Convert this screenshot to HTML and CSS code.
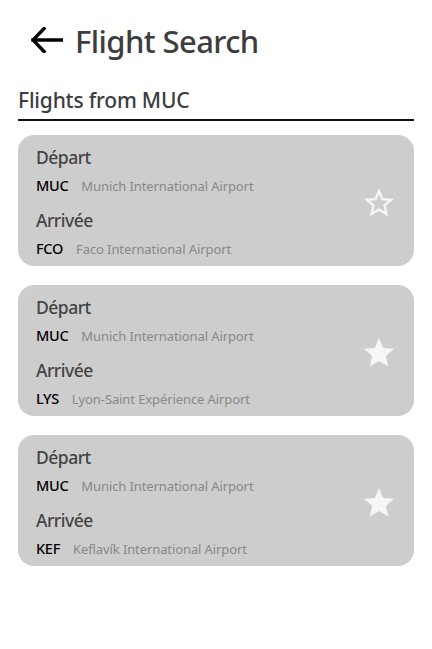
FILE: index.html
```html
<!DOCTYPE html>
<html>
<head>
<meta charset="utf-8">
<link rel="stylesheet" href="styles.css">
</head>
<body>
<div class="app">
  <header class="topbar">
    <svg class="back" width="32" height="26" viewBox="0 0 32 26"><path d="M13 1.5 L2 13 L13 24.5 M2 13 H31" fill="none" stroke="#000" stroke-width="3.4" stroke-linecap="square" stroke-linejoin="miter"/></svg>
    <h1 class="title">Flight Search</h1>
  </header>
  <h2 class="section">Flights from MUC</h2>
  <div class="list">
    <div class="card">
      <div class="info">
        <div class="label">Départ</div>
        <div class="row"><span class="code">MUC</span><span class="name">Munich International Airport</span></div>
        <div class="label">Arrivée</div>
        <div class="row"><span class="code">FCO</span><span class="name">Faco International Airport</span></div>
      </div>
      <svg class="star" width="36" height="36" viewBox="0 0 24 24"><path fill="#f6f6f6" d="M22 9.24l-7.19-.62L12 2 9.19 8.63 2 9.24l5.46 4.73L5.82 21 12 17.27 18.18 21l-1.63-7.03L22 9.24zM12 15.4l-3.76 2.27 1-4.28-3.32-2.88 4.38-.38L12 6.1l1.71 4.04 4.38.38-3.32 2.88 1 4.28L12 15.4z"/></svg>
    </div>
    <div class="card">
      <div class="info">
        <div class="label">Départ</div>
        <div class="row"><span class="code">MUC</span><span class="name">Munich International Airport</span></div>
        <div class="label">Arrivée</div>
        <div class="row"><span class="code">LYS</span><span class="name">Lyon-Saint Expérience Airport</span></div>
      </div>
      <svg class="star" width="36" height="36" viewBox="0 0 24 24"><path fill="#f6f6f6" d="M12 17.27L18.18 21l-1.64-7.03L22 9.24l-7.19-.61L12 2 9.19 8.63 2 9.24l5.46 4.73L5.82 21z"/></svg>
    </div>
    <div class="card">
      <div class="info">
        <div class="label">Départ</div>
        <div class="row"><span class="code">MUC</span><span class="name">Munich International Airport</span></div>
        <div class="label">Arrivée</div>
        <div class="row"><span class="code">KEF</span><span class="name">Keflavík International Airport</span></div>
      </div>
      <svg class="star" width="36" height="36" viewBox="0 0 24 24"><path fill="#f6f6f6" d="M12 17.27L18.18 21l-1.64-7.03L22 9.24l-7.19-.61L12 2 9.19 8.63 2 9.24l5.46 4.73L5.82 21z"/></svg>
    </div>
  </div>
</div>
</body>
</html>
```
FILE: styles.css
```css
html, body {
  margin: 0;
  padding: 0;
  background: #fff;
}
body {
  font-family: "Noto Sans", "Open Sans", sans-serif;
  color: #444;
}
.app {
  padding: 0 18px 0 18px;
}
.topbar {
  display: flex;
  align-items: center;
  height: 82px;
  padding-left: 13px;
  gap: 12px;
}
.back {
  flex: none;
  margin-top: -2px;
}
.title {
  margin: 0;
  font-size: 31px;
  font-weight: 500;
  color: #3d3d3d;
  letter-spacing: -0.6px;
}
.section {
  margin: 0;
  font-size: 21px;
  font-weight: 500;
  color: #3d3d3d;
  letter-spacing: -0.2px;
  line-height: 30px;
  padding-top: 3px;
  padding-bottom: 4px;
  border-bottom: 2px solid #111;
}
.list {
  display: flex;
  flex-direction: column;
  gap: 19px;
  margin-top: 14px;
}
.card {
  background: #cdcdcd;
  border-radius: 16px;
  height: 131px;
  box-sizing: border-box;
  padding: 10px 17px 0 18px;
  display: flex;
  align-items: center;
  justify-content: space-between;
}
.info {
  align-self: flex-start;
  display: flex;
  flex-direction: column;
}
.label {
  font-size: 17.5px;
  font-weight: 500;
  color: #444;
  line-height: 24px;
  letter-spacing: -0.5px;
}
.row {
  display: flex;
  align-items: baseline;
  gap: 13px;
  line-height: 22px;
  margin: 5px 0 11px;
}
.code {
  font-size: 14.5px;
  font-weight: 500;
  color: #000;
  letter-spacing: -0.3px;
}
.name {
  font-size: 13px;
  color: #888;
  letter-spacing: -0.1px;
}
.star {
  flex: none;
  margin-top: -6px;
}
```
